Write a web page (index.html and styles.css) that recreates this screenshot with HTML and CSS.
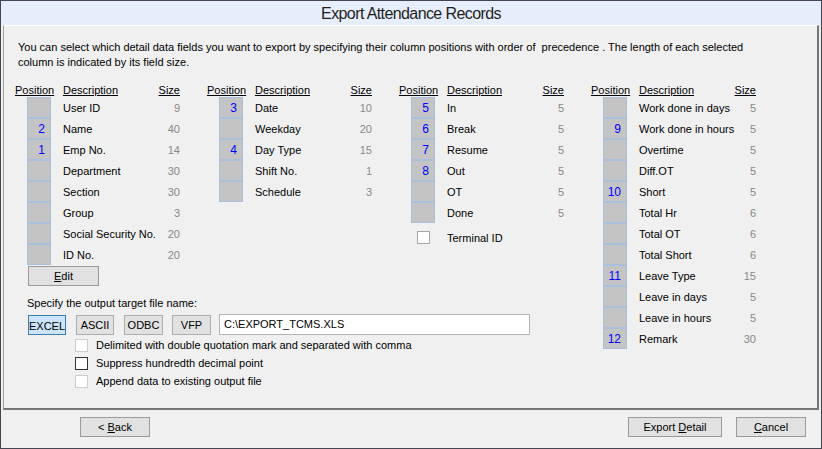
FILE: index.html
```html
<!DOCTYPE html>
<html>
<head>
<meta charset="utf-8">
<link rel="stylesheet" href="styles.css">
</head>
<body>
<div class="window">
  <div class="titlebar"><span>Export Attendance Records</span></div>
  <div class="panel">
    <p class="intro">You can select which detail data fields you want to export by specifying their column positions with order of &nbsp;precedence . The length of each selected<br>column is indicated by its field size.</p>
    <div class="main">
      <div class="left">
        <div class="cols">
          <div class="col">
            <div class="row head"><span>Position</span><span>Description</span><span>Size</span></div>
            <div class="row"><span class="pos"></span><span class="desc">User ID</span><span class="size">9</span></div>
            <div class="row"><span class="pos">2</span><span class="desc">Name</span><span class="size">40</span></div>
            <div class="row"><span class="pos">1</span><span class="desc">Emp No.</span><span class="size">14</span></div>
            <div class="row"><span class="pos"></span><span class="desc">Department</span><span class="size">30</span></div>
            <div class="row"><span class="pos"></span><span class="desc">Section</span><span class="size">30</span></div>
            <div class="row"><span class="pos"></span><span class="desc">Group</span><span class="size">3</span></div>
            <div class="row"><span class="pos"></span><span class="desc">Social Security No.</span><span class="size">20</span></div>
            <div class="row"><span class="pos"></span><span class="desc">ID No.</span><span class="size">20</span></div>
            <button class="btn edit"><u>E</u>dit</button>
          </div>
          <div class="col">
            <div class="row head"><span>Position</span><span>Description</span><span>Size</span></div>
            <div class="row"><span class="pos">3</span><span class="desc">Date</span><span class="size">10</span></div>
            <div class="row"><span class="pos"></span><span class="desc">Weekday</span><span class="size">20</span></div>
            <div class="row"><span class="pos">4</span><span class="desc">Day Type</span><span class="size">15</span></div>
            <div class="row"><span class="pos"></span><span class="desc">Shift No.</span><span class="size">1</span></div>
            <div class="row"><span class="pos"></span><span class="desc">Schedule</span><span class="size">3</span></div>
          </div>
          <div class="col">
            <div class="row head"><span>Position</span><span>Description</span><span>Size</span></div>
            <div class="row"><span class="pos">5</span><span class="desc">In</span><span class="size">5</span></div>
            <div class="row"><span class="pos">6</span><span class="desc">Break</span><span class="size">5</span></div>
            <div class="row"><span class="pos">7</span><span class="desc">Resume</span><span class="size">5</span></div>
            <div class="row"><span class="pos">8</span><span class="desc">Out</span><span class="size">5</span></div>
            <div class="row"><span class="pos"></span><span class="desc">OT</span><span class="size">5</span></div>
            <div class="row"><span class="pos"></span><span class="desc">Done</span><span class="size">5</span></div>
            <div class="row term"><span class="cb term-cb"></span><span class="desc">Terminal ID</span><span></span></div>
          </div>
        </div>
        <div class="output">
          <div class="spec">Specify the output target file name:</div>
          <div class="fmt">
            <button class="btn fbtn excel">EXCEL</button>
            <button class="btn fbtn ascii">ASCII</button>
            <button class="btn fbtn odbc">ODBC</button>
            <button class="btn fbtn vfp">VFP</button>
            <div class="file">C:\EXPORT_TCMS.XLS</div>
          </div>
          <div class="checks">
            <div class="chk-row"><span class="cb"></span><span>Delimited with double quotation mark and separated with comma</span></div>
            <div class="chk-row"><span class="cb dark"></span><span>Suppress hundredth decimal point</span></div>
            <div class="chk-row"><span class="cb"></span><span>Append data to existing output file</span></div>
          </div>
        </div>
      </div>
      <div class="col">
        <div class="row head"><span>Position</span><span>Description</span><span>Size</span></div>
        <div class="row"><span class="pos"></span><span class="desc">Work done in days</span><span class="size">5</span></div>
        <div class="row"><span class="pos">9</span><span class="desc">Work done in hours</span><span class="size">5</span></div>
        <div class="row"><span class="pos"></span><span class="desc">Overtime</span><span class="size">5</span></div>
        <div class="row"><span class="pos"></span><span class="desc">Diff.OT</span><span class="size">5</span></div>
        <div class="row"><span class="pos">10</span><span class="desc">Short</span><span class="size">5</span></div>
        <div class="row"><span class="pos"></span><span class="desc">Total Hr</span><span class="size">6</span></div>
        <div class="row"><span class="pos"></span><span class="desc">Total OT</span><span class="size">6</span></div>
        <div class="row"><span class="pos"></span><span class="desc">Total Short</span><span class="size">6</span></div>
        <div class="row"><span class="pos">11</span><span class="desc">Leave Type</span><span class="size">15</span></div>
        <div class="row"><span class="pos"></span><span class="desc">Leave in days</span><span class="size">5</span></div>
        <div class="row"><span class="pos"></span><span class="desc">Leave in hours</span><span class="size">5</span></div>
        <div class="row"><span class="pos">12</span><span class="desc">Remark</span><span class="size">30</span></div>
      </div>
    </div>
  </div>
  <div class="footer">
    <button class="btn fb back">&lt; <u>B</u>ack</button>
    <span class="spacer"></span>
    <button class="btn fb export">Export <u>D</u>etail</button>
    <button class="btn fb cancel"><u>C</u>ancel</button>
  </div>
</div>
</body>
</html>
```
FILE: styles.css
```css
html, body {
  margin: 0;
  padding: 0;
  background: #f0f0f0;
}
body {
  font-family: "Liberation Sans", Arial, sans-serif;
  font-size: 11px;
  color: #000;
}
.window {
  width: 822px;
  height: 449px;
  box-sizing: border-box;
  border: 1px solid #454552;
  background: #f0f0f0;
  display: flex;
  flex-direction: column;
}
.titlebar {
  flex: none;
  height: 24px;
  box-sizing: border-box;
  padding-top: 2px;
  background: #e7eefb;
  display: flex;
  align-items: center;
  justify-content: center;
  font-size: 16px;
  letter-spacing: -0.6px;
  color: #1e1e1e;
}
.panel {
  flex: none;
  height: 385px;
  box-sizing: border-box;
  margin: 0 2px;
  border-top: 1px solid #ffffff;
  border-left: 1px solid #a0a0a0;
  border-right: 2px solid #767676;
  border-bottom: 2px solid #767676;
}
.intro {
  margin: 14px 0 0 14px;
  line-height: 15px;
  white-space: nowrap;
}
.main {
  display: flex;
  margin-top: 12px;
  padding-left: 11px;
}
.left {
  width: 576px;
}
.cols {
  display: flex;
}
.col {
  width: 192px;
}
.row {
  display: grid;
  grid-template-columns: 48px 1fr auto;
  width: 165px;
  height: 21px;
  align-items: center;
}
.row.head {
  height: 15px;
}
.head span {
  text-decoration: underline;
}
.pos {
  margin-left: 12px;
  width: 24px;
  height: 21px;
  box-sizing: border-box;
  border: 1px solid #a8c0dc;
  background: #c4c4c4;
  color: #0000ff;
  font-size: 12px;
  line-height: 21px;
  text-align: right;
  padding-right: 5px;
}
.desc {
  white-space: nowrap;
}
.size {
  color: #888888;
  text-align: right;
}
.row.term {
  margin-top: 4px;
}
.term-cb {
  margin-left: 18px;
}
.cb {
  display: block;
  width: 13px;
  height: 13px;
  box-sizing: border-box;
  border: 1px solid #cccccc;
  background: #ffffff;
}
.term-cb {
  border-color: #a6a6a6;
}
.cb.dark {
  border-color: #333333;
}
.btn {
  font: inherit;
  color: #000;
  box-sizing: border-box;
  border: 1px solid #9a9a9a;
  background: #e1e1e1;
  padding: 0;
  margin: 0;
}
.edit {
  display: block;
  margin: 1px 0 0 13px;
  width: 71px;
  height: 20px;
}
.output {
  padding-left: 12px;
}
.spec {
  margin-top: 10px;
  line-height: 14px;
}
.fmt {
  display: flex;
  align-items: center;
  height: 21px;
  margin-top: 4px;
}
.fbtn {
  height: 20px;
  border-color: #adadad;
}
.excel {
  margin-left: 1px;
  width: 38px;
  background: #cce4f7;
  border-color: #3c7fb1;
  padding-top: 3px;
}
.ascii {
  margin-left: 10px;
  width: 38px;
}
.odbc {
  margin-left: 10px;
  width: 39px;
}
.vfp {
  margin-left: 9px;
  width: 39px;
}
.file {
  margin-left: 8px;
  width: 311px;
  height: 21px;
  box-sizing: border-box;
  border: 1px solid #b4b4b4;
  background: #ffffff;
  padding-left: 4px;
  line-height: 19px;
}
.checks {
  margin-top: 1px;
  padding-left: 48px;
}
.chk-row {
  display: flex;
  align-items: center;
  gap: 8px;
  height: 18px;
  white-space: nowrap;
}
.footer {
  flex: 1;
  display: flex;
  align-items: flex-start;
  padding: 7px 15px 0 79px;
}
.fb {
  height: 20px;
}
.back {
  width: 70px;
}
.spacer {
  flex: 1;
}
.export {
  width: 94px;
}
.cancel {
  width: 70px;
  margin-left: 14px;
}
```
